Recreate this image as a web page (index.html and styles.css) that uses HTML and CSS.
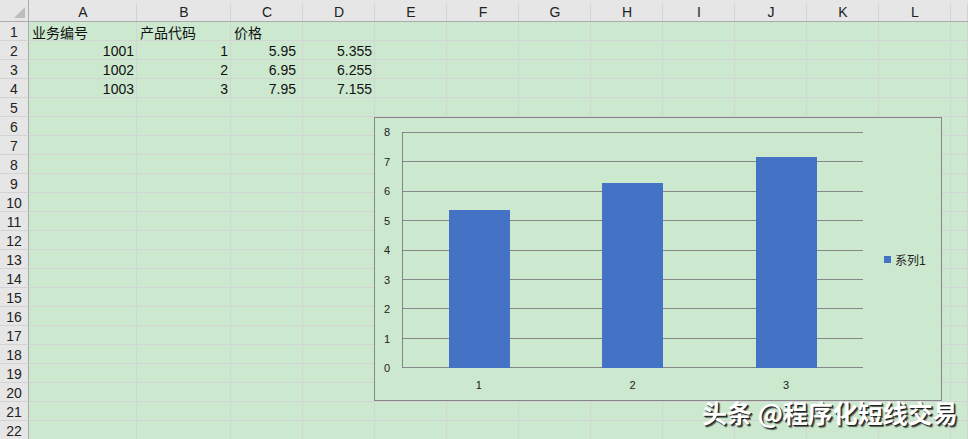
FILE: index.html
```html
<!DOCTYPE html>
<html lang="zh-CN">
<head>
<meta charset="utf-8">
<title>Sheet</title>
<link rel="stylesheet" href="styles.css">
</head>
<body>
<div class="page">
  <div class="sheet">
    <div class="corner"><span class="tri"></span></div>
    <div class="ch">A</div><div class="ch">B</div><div class="ch">C</div><div class="ch">D</div><div class="ch">E</div><div class="ch">F</div><div class="ch">G</div><div class="ch">H</div><div class="ch">I</div><div class="ch">J</div><div class="ch">K</div><div class="ch">L</div><div class="ch"></div>

    <div class="rh">1</div><div class="c">业务编号</div><div class="c">产品代码</div><div class="c">价格</div><div class="c"></div><div class="c"></div><div class="c"></div><div class="c"></div><div class="c"></div><div class="c"></div><div class="c"></div><div class="c"></div><div class="c"></div><div class="c"></div>
    <div class="rh">2</div><div class="c n">1001</div><div class="c n">1</div><div class="c n w">5.95</div><div class="c n">5.355</div><div class="c"></div><div class="c"></div><div class="c"></div><div class="c"></div><div class="c"></div><div class="c"></div><div class="c"></div><div class="c"></div><div class="c"></div>
    <div class="rh">3</div><div class="c n">1002</div><div class="c n">2</div><div class="c n w">6.95</div><div class="c n">6.255</div><div class="c"></div><div class="c"></div><div class="c"></div><div class="c"></div><div class="c"></div><div class="c"></div><div class="c"></div><div class="c"></div><div class="c"></div>
    <div class="rh">4</div><div class="c n">1003</div><div class="c n">3</div><div class="c n w">7.95</div><div class="c n">7.155</div><div class="c"></div><div class="c"></div><div class="c"></div><div class="c"></div><div class="c"></div><div class="c"></div><div class="c"></div><div class="c"></div><div class="c"></div>
    <div class="rh">5</div><div class="c"></div><div class="c"></div><div class="c"></div><div class="c"></div><div class="c"></div><div class="c"></div><div class="c"></div><div class="c"></div><div class="c"></div><div class="c"></div><div class="c"></div><div class="c"></div><div class="c"></div>
    <div class="rh">6</div><div class="c"></div><div class="c"></div><div class="c"></div><div class="c"></div><div class="c"></div><div class="c"></div><div class="c"></div><div class="c"></div><div class="c"></div><div class="c"></div><div class="c"></div><div class="c"></div><div class="c"></div>
    <div class="rh">7</div><div class="c"></div><div class="c"></div><div class="c"></div><div class="c"></div><div class="c"></div><div class="c"></div><div class="c"></div><div class="c"></div><div class="c"></div><div class="c"></div><div class="c"></div><div class="c"></div><div class="c"></div>
    <div class="rh">8</div><div class="c"></div><div class="c"></div><div class="c"></div><div class="c"></div><div class="c"></div><div class="c"></div><div class="c"></div><div class="c"></div><div class="c"></div><div class="c"></div><div class="c"></div><div class="c"></div><div class="c"></div>
    <div class="rh">9</div><div class="c"></div><div class="c"></div><div class="c"></div><div class="c"></div><div class="c"></div><div class="c"></div><div class="c"></div><div class="c"></div><div class="c"></div><div class="c"></div><div class="c"></div><div class="c"></div><div class="c"></div>
    <div class="rh">10</div><div class="c"></div><div class="c"></div><div class="c"></div><div class="c"></div><div class="c"></div><div class="c"></div><div class="c"></div><div class="c"></div><div class="c"></div><div class="c"></div><div class="c"></div><div class="c"></div><div class="c"></div>
    <div class="rh">11</div><div class="c"></div><div class="c"></div><div class="c"></div><div class="c"></div><div class="c"></div><div class="c"></div><div class="c"></div><div class="c"></div><div class="c"></div><div class="c"></div><div class="c"></div><div class="c"></div><div class="c"></div>
    <div class="rh">12</div><div class="c"></div><div class="c"></div><div class="c"></div><div class="c"></div><div class="c"></div><div class="c"></div><div class="c"></div><div class="c"></div><div class="c"></div><div class="c"></div><div class="c"></div><div class="c"></div><div class="c"></div>
    <div class="rh">13</div><div class="c"></div><div class="c"></div><div class="c"></div><div class="c"></div><div class="c"></div><div class="c"></div><div class="c"></div><div class="c"></div><div class="c"></div><div class="c"></div><div class="c"></div><div class="c"></div><div class="c"></div>
    <div class="rh">14</div><div class="c"></div><div class="c"></div><div class="c"></div><div class="c"></div><div class="c"></div><div class="c"></div><div class="c"></div><div class="c"></div><div class="c"></div><div class="c"></div><div class="c"></div><div class="c"></div><div class="c"></div>
    <div class="rh">15</div><div class="c"></div><div class="c"></div><div class="c"></div><div class="c"></div><div class="c"></div><div class="c"></div><div class="c"></div><div class="c"></div><div class="c"></div><div class="c"></div><div class="c"></div><div class="c"></div><div class="c"></div>
    <div class="rh">16</div><div class="c"></div><div class="c"></div><div class="c"></div><div class="c"></div><div class="c"></div><div class="c"></div><div class="c"></div><div class="c"></div><div class="c"></div><div class="c"></div><div class="c"></div><div class="c"></div><div class="c"></div>
    <div class="rh">17</div><div class="c"></div><div class="c"></div><div class="c"></div><div class="c"></div><div class="c"></div><div class="c"></div><div class="c"></div><div class="c"></div><div class="c"></div><div class="c"></div><div class="c"></div><div class="c"></div><div class="c"></div>
    <div class="rh">18</div><div class="c"></div><div class="c"></div><div class="c"></div><div class="c"></div><div class="c"></div><div class="c"></div><div class="c"></div><div class="c"></div><div class="c"></div><div class="c"></div><div class="c"></div><div class="c"></div><div class="c"></div>
    <div class="rh">19</div><div class="c"></div><div class="c"></div><div class="c"></div><div class="c"></div><div class="c"></div><div class="c"></div><div class="c"></div><div class="c"></div><div class="c"></div><div class="c"></div><div class="c"></div><div class="c"></div><div class="c"></div>
    <div class="rh">20</div><div class="c"></div><div class="c"></div><div class="c"></div><div class="c"></div><div class="c"></div><div class="c"></div><div class="c"></div><div class="c"></div><div class="c"></div><div class="c"></div><div class="c"></div><div class="c"></div><div class="c"></div>
    <div class="rh">21</div><div class="c"></div><div class="c"></div><div class="c"></div><div class="c"></div><div class="c"></div><div class="c"></div><div class="c"></div><div class="c"></div><div class="c"></div><div class="c"></div><div class="c"></div><div class="c"></div><div class="c"></div>
    <div class="rh">22</div><div class="c"></div><div class="c"></div><div class="c"></div><div class="c"></div><div class="c"></div><div class="c"></div><div class="c"></div><div class="c"></div><div class="c"></div><div class="c"></div><div class="c"></div><div class="c"></div><div class="c"></div>
  </div>

  <div class="chart">
    <div class="yaxis">
      <span class="yl">8</span><span class="yl">7</span><span class="yl">6</span><span class="yl">5</span><span class="yl">4</span><span class="yl">3</span><span class="yl">2</span><span class="yl">1</span><span class="yl">0</span>
    </div>
    <div class="plotcol">
      <div class="plot">
        <div class="grid">
          <span></span><span></span><span></span><span></span><span></span><span></span><span></span><span></span>
        </div>
        <div class="bars">
          <div class="cat"><div class="bar" style="height:66.94%"></div></div>
          <div class="cat"><div class="bar" style="height:78.19%"></div></div>
          <div class="cat"><div class="bar" style="height:89.44%"></div></div>
        </div>
      </div>
      <div class="xaxis"><span>1</span><span>2</span><span>3</span></div>
    </div>
    <div class="legend"><span class="key"></span><span class="lt">系列1</span></div>
  </div>

  <div class="mark">头条 @程序化短线交易</div>
</div>
</body>
</html>
```
FILE: styles.css
```css
* { box-sizing: border-box; }
html, body { margin: 0; padding: 0; }
body {
  width: 968px;
  height: 439px;
  overflow: hidden;
  background: #cce8cf;
  font-family: "Liberation Sans", "Noto Sans CJK SC", sans-serif;
  font-size: 14px;
  color: #111;
}
.page { position: relative; width: 968px; height: 439px; overflow: hidden; }

.sheet {
  display: grid;
  grid-template-columns: 29px 108px 94px repeat(10, 72px) 17px;
  grid-template-rows: 22px;
  grid-auto-rows: 19px;
  width: 968px;
}
.corner {
  position: relative;
  background: #e6e6e6;
  border-right: 1px solid #ababab;
  border-bottom: 1px solid #ababab;
}
.tri {
  position: absolute;
  left: 14px;
  top: 7px;
  width: 0;
  height: 0;
  border-left: 11px solid transparent;
  border-bottom: 11px solid #bdbdbd;
}
.ch {
  background: linear-gradient(#d3d3d3, #d3d3d3) right 4px / 1px 18px no-repeat, #e6e6e6;
  border-bottom: 1px solid #ababab;
  display: flex;
  align-items: center;
  justify-content: center;
  padding-top: 2px;
  color: #222;
}
.rh {
  background: #e6e6e6;
  border-right: 1px solid #ababab;
  border-bottom: 1px solid #d3d3d3;
  display: flex;
  align-items: center;
  justify-content: center;
  padding-top: 2px;
  color: #222;
}
.c {
  border-right: 1px solid #d4d4d4;
  border-bottom: 1px solid #d4d4d4;
  padding: 2px 3px 0;
  display: flex;
  align-items: center;
  white-space: nowrap;
  overflow: visible;
}
.c.n { justify-content: flex-end; padding-right: 2px; }
.c.w { padding-right: 6px; }

.chart {
  position: absolute;
  left: 374px;
  top: 117px;
  width: 568px;
  height: 284px;
  border: 1px solid #868686;
  background: #cce8cf;
  display: flex;
  font-family: "Liberation Sans", "Noto Sans CJK SC", sans-serif;
  color: #222;
}
.yaxis {
  width: 27px;
  margin-top: 14px;
  height: 236px;
  display: flex;
  flex-direction: column;
  justify-content: space-between;
  padding-right: 12px;
}
.yl {
  height: 0;
  display: flex;
  align-items: center;
  justify-content: flex-end;
  font-size: 11px;
}
.plotcol {
  width: 461px;
  display: flex;
  flex-direction: column;
  padding-top: 14px;
}
.plot {
  position: relative;
  height: 236px;
  border-left: 1px solid #868686;
}
.grid {
  height: 100%;
  display: flex;
  flex-direction: column;
  border-bottom: 1px solid #868686;
}
.grid span { flex: 1; border-top: 1px solid #868686; }
.bars {
  position: absolute;
  inset: 0 0 0 0;
  display: flex;
}
.cat {
  flex: 1;
  display: flex;
  align-items: flex-end;
  justify-content: center;
}
.bar { width: 61px; background: #4472c4; }
.xaxis {
  display: flex;
  padding-top: 11px;
  font-size: 11px;
}
.xaxis span { flex: 1; text-align: center; }
.legend {
  flex: 1;
  display: flex;
  align-items: center;
  padding-left: 21px;
  gap: 4px;
}
.key { width: 7px; height: 7px; background: #4472c4; }
.lt { font-size: 12px; color: #222; }

.mark {
  position: absolute;
  left: 702px;
  top: 396px;
  font-family: "Noto Sans CJK SC", sans-serif;
  font-weight: 700;
  font-size: 25px;
  line-height: 32px;
  color: #fff;
  white-space: nowrap;
  text-shadow: 1px 1px 0 #222, 2px 2px 1px rgba(0,0,0,0.6);
}
```
